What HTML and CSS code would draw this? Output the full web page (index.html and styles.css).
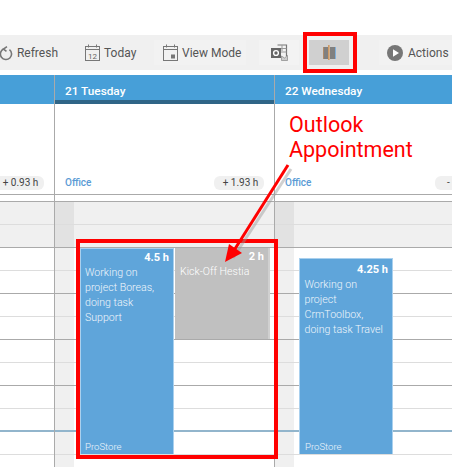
FILE: index.html
```html
<!DOCTYPE html>
<html lang="en">
  <head>
    <meta charset="UTF-8" />
    <title>Calendar</title>
    <link rel="stylesheet" href="styles.css">
  </head>
  <body>
    <div class="toolbar">
      <div class="tool tool-refresh">
        <svg width="14" height="16" viewBox="0 0 14 16" fill="none" stroke="#777" stroke-width="1.6">
          <path d="M4.5 4A5.6 5.6 0 1 0 10.5 4.6" />
          <path d="M8 1.6 L4.5 4 L7.5 6.4" />
        </svg>
        Refresh
      </div>
      <div class="tool tool-today">
        <svg width="15" height="17" viewBox="0 0 15 17" fill="none" stroke="#777">
          <rect x="0.5" y="2.5" width="14" height="14" />
          <path d="M0.5 5.5H14.5M3.5 0.5V3.5M11.5 0.5V3.5" />
          <text x="7.5" y="14.5" class="cal-num">12</text>
        </svg>
        Today
      </div>
      <div class="tool tool-view">
        <svg width="15" height="17" viewBox="0 0 15 17" fill="none" stroke="#777">
          <rect x="0.5" y="2.5" width="14" height="14" />
          <path d="M0.5 5.5H14.5M3.5 0.5V3.5M11.5 0.5V3.5" />
          <rect x="8" y="10.5" width="4" height="4" fill="#777" stroke="none" />
        </svg>
        View Mode
      </div>
      <div class="tool tool-outlook">
        <svg width="17" height="17" viewBox="0 0 17 17">
          <path d="M6.5 1H15.5V12" fill="none" stroke="#777" stroke-width="1.2" />
          <path d="M11 1V7M6.5 4.5H15.5M6.5 8H15.5" fill="none" stroke="#999" />
          <rect x="0" y="4" width="10" height="10" fill="#666" />
          <circle cx="5" cy="9" r="2.4" fill="none" stroke="#fff" stroke-width="1.4" />
          <path d="M10.5 16.5H16.5V11.5L13.5 14L10.5 12Z" fill="#ccc" stroke="#777" stroke-width="0.6" />
        </svg>
      </div>
      <div class="tool tool-split">
        <svg width="13" height="15" viewBox="0 0 13 15">
          <rect x="0" y="2" width="5" height="12" fill="#808080" />
          <rect x="0" y="2" width="1" height="12" fill="#b08a68" />
          <rect x="7" y="2" width="5" height="12" fill="#808080" />
          <rect x="12" y="2" width="1" height="12" fill="#7fb0dc" />
          <rect x="5" y="0" width="1.6" height="15" fill="#d09a63" />
        </svg>
      </div>
      <div class="tool-sep"></div>
      <div class="tool tool-actions">
        <svg width="16" height="16" viewBox="0 0 16 16">
          <circle cx="8" cy="8" r="8" fill="#777" />
          <path d="M6 4.2L12 8L6 11.8Z" fill="#fff" />
        </svg>
        Actions
      </div>
    </div>

    <div class="calendar">
      <div class="day day-prev">
        <div class="day-head"></div>
        <div class="day-top">
          <span class="pill">+ 0.93 h</span>
        </div>
        <div class="day-gap"></div>
        <div class="slots"></div>
      </div>

      <div class="day day-today">
        <div class="day-head">21 Tuesday</div>
        <div class="day-top">
          <span class="office">Office</span>
          <span class="pill">+ 1.93 h</span>
        </div>
        <div class="day-gap"></div>
        <div class="slots">
          <div class="appt appt-boreas">
            <div class="appt-hours">4.5 h</div>
            <div class="appt-text">Working on project Boreas, doing task Support</div>
            <div class="appt-foot">ProStore</div>
          </div>
          <div class="appt appt-outlook">
            <div class="appt-hours">2 h</div>
            <div class="appt-text">Kick-Off Hestia</div>
          </div>
        </div>
      </div>

      <div class="day day-next">
        <div class="day-head">22 Wednesday</div>
        <div class="day-top">
          <span class="office">Office</span>
          <span class="pill pill-cut">-</span>
        </div>
        <div class="day-gap"></div>
        <div class="slots">
          <div class="appt appt-crm">
            <div class="appt-hours">4.25 h</div>
            <div class="appt-text">Working on project CrmToolbox, doing task Travel</div>
            <div class="appt-foot">ProStore</div>
          </div>
        </div>
      </div>
    </div>

    <!-- annotations on top of the screenshot -->
    <div class="mark mark-tool"></div>
    <div class="mark mark-appts"></div>
    <div class="note">Outlook<br />Appointment</div>
    <svg class="arrow" width="80" height="110" viewBox="0 0 80 110">
      <path d="M68 5 L10 94" stroke="#999" stroke-width="3" opacity="0.45" transform="translate(2 2)" />
      <path d="M67 3 L12 90" stroke="#f00" stroke-width="3" />
      <path d="M4 100 L8 82 L21 91 Z" fill="#f00" />
    </svg>

    <script>
      // grid rows are all the same, so build them here
      document.querySelectorAll(".slots").forEach((slots) => {
        for (let i = 0; i < 12; i++) {
          const row = document.createElement("div");
          row.className = "slot";
          if (i < 2) row.classList.add("slot-off");
          if (i % 2 == 1) row.classList.add("slot-hour");
          if (i == 9) row.classList.add("slot-now");
          slots.appendChild(row);
        }
      });
    </script>
  </body>
</html>
```

FILE: styles.css
```css
* {
  box-sizing: border-box;
}

html,
body {
  height: 467px;
}

body {
  position: relative;
  margin: 0;
  padding-top: 35px;
  overflow: hidden;
  background: #fff;
  font-family: Roboto, "Liberation Sans", sans-serif;
}

.toolbar {
  display: flex;
  align-items: center;
  height: 35px;
  background: #f0f0f0;
  color: #555;
  font-size: 12px;
}

.tool {
  display: flex;
  align-items: center;
  gap: 4px;
  height: 25px;
  flex: none;
}

.tool-refresh {
  margin-left: -3px;
  padding-left: 2px;
  width: 61px;
}

.tool-today {
  margin-left: 24px;
  padding-left: 3px;
  width: 56px;
}

.tool-view {
  margin-left: 16px;
  padding-left: 9px;
  width: 92px;
  background: #f2f2f2;
}

.tool-outlook {
  margin-left: 13px;
  width: 40px;
  justify-content: center;
  background: #f3f3f3;
}

.tool-split {
  margin-left: 10px;
  width: 40px;
  justify-content: center;
  background: #d0d0d0;
}

.tool-sep {
  width: 1px;
  height: 15px;
  margin-left: 15px;
  background: #ccc;
}

.tool-actions {
  margin-left: 15px;
  padding-left: 8px;
  width: 90px;
  gap: 5px;
  background: #f2f2f2;
}

.cal-num {
  font-size: 8px;
  fill: #666;
  stroke: none;
  text-anchor: middle;
}

.calendar {
  display: flex;
  margin-top: 5px;
  height: 392px;
  overflow: hidden;
}

.day {
  flex: none;
  width: 220px;
  border-right: 1px solid #aaa;
}

.day-prev {
  width: 55px;
}

.day-next {
  border-right: none;
}

.day-head {
  height: 29px;
  padding: 9px 0 0 10px;
  background: #479fd8;
  color: #fff;
  font-size: 11.8px;
  font-weight: 500;
}

.day-today .day-head {
  border-bottom: 4px solid #2f6587;
}

.day-top {
  display: flex;
  align-items: flex-end;
  justify-content: space-between;
  height: 91px;
  padding: 0 10px 4px 10px;
  border-bottom: 1px solid #aaa;
}

.day-prev .day-top {
  justify-content: flex-end;
}

.office {
  color: #5b9bd5;
  font-size: 10px;
  font-weight: 500;
  line-height: 14px;
}

.pill {
  flex: none;
  width: 50px;
  height: 14px;
  padding-left: 3px;
  overflow: hidden;
  background: #f0f0f0;
  border-radius: 6px;
  color: #444;
  font-size: 10px;
  line-height: 14px;
  text-align: center;
}

.pill-cut {
  padding-left: 12px;
  text-align: left;
}

.day-gap {
  height: 7px;
  border-bottom: 1px solid #aaa;
}

.slots {
  position: relative;
}

.slot {
  height: 23px;
  border-bottom: 1px solid #ddd;
  background: linear-gradient(to right, #f0f0f0 19px, #fff 19px);
}

.slot-off {
  background: linear-gradient(to right, #e2e2e2 19px, #f0f0f0 19px);
}

.slot-hour {
  border-bottom-color: #aaa;
}

.slot-now {
  border-bottom: 2px solid #92b5cc;
}

.day-prev .slot {
  background: #fff;
}

.day-prev .slot-off {
  background: #f0f0f0;
}

.appt {
  position: absolute;
  z-index: 1;
  width: 94px;
  color: #f0f6fb;
  font-size: 10.6px;
  line-height: 15px;
}

.appt-boreas {
  left: 25px;
  top: 46px;
  height: 206px;
  background: #5fa5da;
  border: 1px solid #a9d0ee;
  border-bottom: none;
}

.appt-outlook {
  left: 120px;
  top: 46px;
  width: 95px;
  height: 91px;
  background: #c0c0c0;
  border-right: 2px solid #d0d0d0;
  color: #fff;
}

.appt-crm {
  left: 24px;
  top: 56px;
  height: 196px;
  background: #5fa5da;
  border: 1px solid #a9d0ee;
  border-bottom: none;
}

.appt-hours {
  padding: 1px 4px 0 0;
  color: #fff;
  font-size: 11px;
  font-weight: 700;
  text-align: right;
}

.appt-crm .appt-hours {
  padding-top: 3px;
}

.appt-text {
  padding: 0 4px;
  font-weight: 300;
}

.appt-outlook .appt-text {
  padding-left: 5px;
}

.appt-crm .appt-text {
  padding-left: 4.5px;
}

.appt-foot {
  position: absolute;
  left: 4px;
  bottom: 0;
  font-size: 9.6px;
  font-weight: 300;
}

.appt-crm .appt-foot {
  left: 5px;
}

.mark {
  position: absolute;
  z-index: 2;
  border: 4px solid #f00;
}

.mark-tool {
  left: 303px;
  top: 32px;
  width: 54px;
  height: 41px;
}

.mark-appts {
  left: 76px;
  top: 239px;
  width: 202px;
  height: 220px;
}

.note {
  position: absolute;
  z-index: 2;
  left: 289px;
  top: 112px;
  color: #f00;
  font-size: 21.5px;
  line-height: 25px;
}

.arrow {
  position: absolute;
  z-index: 3;
  left: 221px;
  top: 162px;
}
```
